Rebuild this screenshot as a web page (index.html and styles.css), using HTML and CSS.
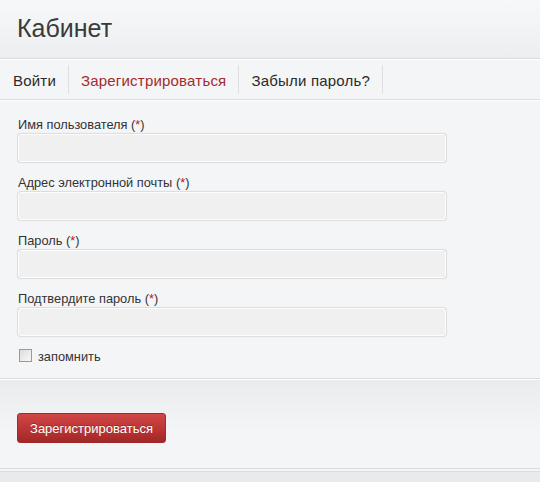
FILE: index.html
```html
<!DOCTYPE html>
<html lang="ru">
<head>
<meta charset="utf-8">
<title>Кабинет</title>
<link rel="stylesheet" href="styles.css">
</head>
<body>
<div class="page">
  <header class="header">
    <h1 class="title">Кабинет</h1>
  </header>
  <nav class="tabs">
    <a class="tab">Войти</a>
    <a class="tab tab-active">Зарегистрироваться</a>
    <a class="tab">Забыли пароль?</a>
  </nav>
  <form class="form">
    <div class="field">
      <label class="label">Имя пользователя <span class="req">(<span class="star">*</span>)</span></label>
      <input class="input" type="text">
    </div>
    <div class="field">
      <label class="label">Адрес электронной почты <span class="req">(<span class="star">*</span>)</span></label>
      <input class="input" type="text">
    </div>
    <div class="field">
      <label class="label">Пароль <span class="req">(<span class="star">*</span>)</span></label>
      <input class="input" type="password">
    </div>
    <div class="field">
      <label class="label">Подтвердите пароль <span class="req">(<span class="star">*</span>)</span></label>
      <input class="input" type="password">
    </div>
    <label class="remember"><span class="checkbox"></span><span class="remember-text">запомнить</span></label>
  </form>
  <div class="footer">
    <button class="btn" type="button">Зарегистрироваться</button>
  </div>
  <div class="bottom"></div>
</div>
</body>
</html>
```
FILE: styles.css
```css
html, body {
  margin: 0;
  padding: 0;
}
body {
  background: #f4f5f7;
  font-family: "Liberation Sans", Arial, sans-serif;
  color: #333;
}
.page {
  width: 540px;
  height: 482px;
  overflow: hidden;
  display: flex;
  flex-direction: column;
}
.header {
  height: 59px;
  flex: none;
  box-sizing: border-box;
  padding: 14px 0 0 17px;
  background: linear-gradient(#f7f8f9, #eceef0);
  border-bottom: 1px solid #d9dadc;
}
.title {
  margin: 0;
  font-size: 25px;
  line-height: 28px;
  font-weight: normal;
  color: #3a3a3a;
}
.tabs {
  display: flex;
  flex: none;
  height: 41px;
  box-sizing: border-box;
  padding: 5px 0 5px 1px;
  border-top: 1px solid #ffffff;
  border-bottom: 1px solid #dcdddf;
  background: #f4f5f7;
}
.tab {
  display: block;
  padding: 3px 12px 0 12px;
  font-size: 15px;
  line-height: 26px;
  letter-spacing: 0.2px;
  color: #2a2a2a;
  border-right: 1px solid #dedfe1;
}
.tab-active {
  color: #a52a2a;
}
.form {
  margin: 0;
  flex: none;
  padding: 16px 0 16px 18px;
  border-top: 1px solid #ffffff;
}
.field {
  margin-bottom: 13px;
}
.label {
  display: block;
  font-size: 12.8px;
  line-height: 16px;
  margin-bottom: 1px;
  color: #333;
}
.star {
  color: #cc1111;
}
.input {
  display: block;
  box-sizing: border-box;
  width: 428px;
  height: 28px;
  margin: 0;
  padding: 0 6px;
  background: #f0f0f0;
  border: 1px solid #fcfcfc;
  border-radius: 3px;
  box-shadow: 0 0 1px 1px #dcdcdc;
  outline: none;
}
.remember {
  display: flex;
  align-items: center;
  height: 13px;
  font-size: 12.8px;
  line-height: 13px;
}
.checkbox {
  display: block;
  width: 11px;
  height: 11px;
  margin: 0 6px 0 1px;
  border: 1px solid #9a9a9a;
  background: linear-gradient(135deg, #dcdcdc, #f8f8f8);
}
.remember-text {
  padding-top: 1px;
}
.footer {
  height: 91px;
  flex: none;
  box-sizing: border-box;
  padding: 34px 0 0 17px;
  border-top: 1px solid #dadbdd;
  border-bottom: 1px solid #dadbdd;
  background: linear-gradient(#eaebed, #f4f5f7 60%);
  box-shadow: inset 0 1px 0 #ffffff;
}
.btn {
  display: block;
  height: 30px;
  width: 149px;
  margin: 0;
  padding: 0;
  font-family: "Liberation Sans", Arial, sans-serif;
  font-size: 13px;
  color: #ffffff;
  background: linear-gradient(#d24646, #b12e2e 75%, #9e2828);
  border: 1px solid #a32a2a;
  border-radius: 3px;
  text-shadow: 0 -1px 0 rgba(0,0,0,0.25);
}
.bottom {
  flex: 1;
  margin-top: 2px;
  border-top: 1px solid #dcdddf;
  background: #e9eaec;
}
```
